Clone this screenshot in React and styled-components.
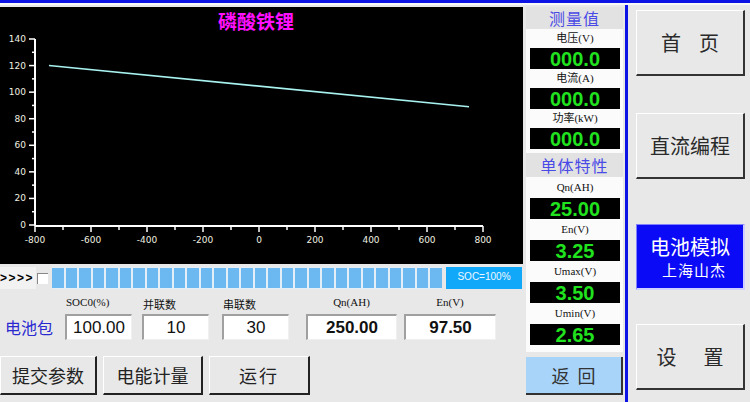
import React from 'react';
import styled, { createGlobalStyle } from 'styled-components';

const CJK = `"Liberation Serif", "Noto Sans CJK SC", serif`;
const SANS = `"Liberation Sans", "Noto Sans CJK SC", sans-serif`;

const GlobalStyle = createGlobalStyle`
    html, body {
        margin: 0;
        padding: 0;
        background: #e8e8e8;
    }
`

// Styled Components
const Screen = styled.div`
    width: 750px;
    height: 402px;
    background: #e8e8e8;
    display: flex;
    flex-direction: column;
    overflow: hidden;
    font-family: ${CJK};
`
const TopBar = styled.div`
    height: 3px;
    background: #0b14e4;
    border-bottom: 2px solid #f8f8f8;
    flex-shrink: 0;
`
const Body = styled.div`
    flex: 1;
    display: flex;
    padding-top: 2px;
`
const Work = styled.div`
    width: 625px;
    flex-shrink: 0;
    display: flex;
`
const ChartCol = styled.div`
    width: 523px;
    display: flex;
    flex-direction: column;
`
const ChartBox = styled.div`
    height: 257px;
    background: #000;
`
const ProgressRow = styled.div`
    height: 24px;
    margin-top: 2px;
    display: flex;
    align-items: center;
`
const Arrows = styled.div`
    width: 36px;
    font-family: ${SANS};
    font-size: 12px;
    font-weight: bold;
    letter-spacing: 1.5px;
    color: #000;
    background: #f2f2f2;
    height: 22px;
    line-height: 22px;
`
const Check = styled.div`
    width: 10px;
    height: 10px;
    background: #fff;
    border-top: 1px solid #888;
    border-left: 1px solid #888;
    margin: 0 4px 0 1px;
`
const Track = styled.div`
    width: 390px;
    height: 22px;
    display: flex;
    gap: 2px;
    padding: 1px 0;
    box-sizing: border-box;
    background: #e4eef6;
`
const Segment = styled.div`
    flex: 1;
    background: #6cb9f2;
`
const SocBox = styled.div`
    width: 76px;
    height: 22px;
    margin-left: 4px;
    background: #12a8fa;
    color: #f0f8ff;
    font-family: ${SANS};
    font-size: 10px;
    text-align: center;
    line-height: 20px;
`
const FormRow = styled.div`
    display: flex;
    align-items: flex-end;
    margin-top: 5px;
    height: 45px;
`
const PackLabel = styled.div`
    width: 60px;
    padding-left: 5px;
    box-sizing: border-box;
    color: #2a2ad0;
    font-size: 16px;
    height: 26px;
    line-height: 26px;
    font-family: "Noto Sans CJK SC", sans-serif;
`
const Field = styled.div`
    display: flex;
    flex-direction: column;
    width: ${p => p.$w}px;
    margin-left: ${p => p.$ml}px;
`
const FieldLabel = styled.div`
    font-size: 11px;
    color: #111;
    height: 18px;
    text-align: ${p => p.$align};
    padding-left: ${p => (p.$align === 'left' ? 1 : 0)}px;
    font-family: ${CJK};
`
const Input = styled.div`
    height: 26px;
    box-sizing: border-box;
    background: #fff;
    border-top: 2px solid #a0a0a0;
    border-left: 2px solid #a0a0a0;
    border-bottom: 1px solid #f0f0f0;
    border-right: 1px solid #f0f0f0;
    font-family: ${SANS};
    font-size: 17px;
    font-weight: ${p => (p.$bold ? 'bold' : 'normal')};
    color: #111;
    text-align: center;
    line-height: 23px;
`
const ButtonRow = styled.div`
    display: flex;
    gap: 6px;
    margin-top: 16px;
`
const Btn = styled.div`
    width: ${p => p.$w}px;
    height: 39px;
    box-sizing: border-box;
    background: #e8e8e8;
    border-top: 1px solid #fff;
    border-left: 1px solid #fff;
    border-right: 2px solid #222;
    border-bottom: 2px solid #222;
    font-family: "Noto Sans CJK SC", sans-serif;
    font-size: 18px;
    color: #222;
    display: flex;
    align-items: center;
    justify-content: center;
    letter-spacing: ${p => p.$ls || 0}px;
`
const MeasureCol = styled.div`
    width: 97px;
    margin-left: 3px;
    display: flex;
    flex-direction: column;
`
const Panel = styled.div`
    background: #fbfbfb;
    height: 345px;
    display: flex;
    flex-direction: column;
    padding: 0 3px 0 4px;
`
const Header = styled.div`
    margin: ${p => p.$mt}px -3px 0 -4px;
    height: ${p => p.$h}px;
    background: #e2e2e2;
    color: #4a4ae6;
    font-family: "Noto Sans CJK SC", sans-serif;
    font-size: 16px;
    text-align: center;
    line-height: ${p => p.$h}px;
    letter-spacing: 1px;
`
const Label = styled.div`
    height: ${p => p.$h}px;
    font-size: 11px;
    color: #111;
    text-align: center;
    line-height: ${p => p.$h}px;
`
const Display = styled.div`
    height: 21px;
    background: #000;
    color: #21e21e;
    font-family: ${SANS};
    font-weight: bold;
    font-size: 20px;
    text-align: center;
    line-height: 22px;
`
const BackBtn = styled.div`
    margin-top: 5px;
    height: 38px;
    background: #a8d4fa;
    border-right: 2px solid #333;
    border-bottom: 2px solid #333;
    box-sizing: border-box;
    color: #333;
    font-family: "Noto Sans CJK SC", sans-serif;
    font-size: 18px;
    letter-spacing: 8px;
    display: flex;
    align-items: center;
    justify-content: center;
    padding-left: 8px;
`
const Divider = styled.div`
    width: 3px;
    flex-shrink: 0;
    background: #0b14e4;
    margin-top: -2px;
`
const Nav = styled.div`
    flex: 1;
    min-width: 0;
    display: flex;
    flex-direction: column;
    padding: 3px 5px 0 8px;
`
const NavBtn = styled.div`
    height: 66px;
    margin-top: ${p => p.$mt}px;
    box-sizing: border-box;
    background: ${p => (p.$active ? '#0a0af6' : '#e8e8e8')};
    border-top: 1px solid ${p => (p.$active ? '#8080ff' : '#fff')};
    border-left: 1px solid ${p => (p.$active ? '#8080ff' : '#fff')};
    border-right: 2px solid ${p => (p.$active ? '#d0d0ff' : '#333')};
    border-bottom: 2px solid ${p => (p.$active ? '#d0d0ff' : '#333')};
    color: ${p => (p.$active ? '#fff' : '#2a2a2a')};
    font-family: "Noto Sans CJK SC", sans-serif;
    font-size: 20px;
    display: flex;
    flex-direction: column;
    align-items: center;
    justify-content: center;
    white-space: nowrap;
    line-height: 1;
`
const NavText = styled.span`
    letter-spacing: ${p => p.$ls || 0}px;
    margin-right: -${p => p.$ls || 0}px;
`
const SubText = styled.div`
    font-size: 15px;
    letter-spacing: 1px;
    padding-left: 8px;
    margin-top: 5px;
`

const X0 = 35
const XPX = 448 / 1600
const Y0 = 218
const YPX = 186 / 140
const xp = v => X0 + (v + 800) * XPX
const yp = v => Y0 - v * YPX

const Chart = () => {
    const xMajor = [-800, -600, -400, -200, 0, 200, 400, 600, 800]
    const xMinor = [-700, -500, -300, -100, 100, 300, 500, 700]
    const yMajor = [0, 20, 40, 60, 80, 100, 120, 140]
    const yMinor = [10, 30, 50, 70, 90, 110, 130]
    return (
        <svg width="523" height="257" viewBox="0 0 523 257">
            <text x="256" y="22" fill="#ff10ff" fontSize="19" fontWeight="bold"
                fontFamily='"Noto Sans CJK SC", sans-serif' textAnchor="middle">磷酸铁锂</text>
            <line x1={X0} y1={yp(140)} x2={X0} y2={Y0 + 1} stroke="#fff" strokeWidth="2" />
            <line x1={X0} y1={Y0 + 1} x2={xp(800)} y2={Y0 + 1} stroke="#fff" strokeWidth="2" />
            {yMajor.map(v => (
                <g key={v}>
                    <line x1={X0 - 6} y1={yp(v)} x2={X0} y2={yp(v)} stroke="#fff" strokeWidth="1.5" />
                    <text x={X0 - 9} y={yp(v) + 3} fill="#f0f0e0" fontSize="9"
                        fontFamily='"DejaVu Sans", sans-serif' textAnchor="end">{v}</text>
                </g>
            ))}
            {yMinor.map(v => (
                <line key={v} x1={X0 - 3} y1={yp(v)} x2={X0} y2={yp(v)} stroke="#fff" strokeWidth="1.5" />
            ))}
            {xMajor.map(v => (
                <g key={v}>
                    <line x1={xp(v)} y1={Y0 + 1} x2={xp(v)} y2={Y0 + 7} stroke="#fff" strokeWidth="1.5" />
                    <text x={xp(v)} y={Y0 + 18} fill="#f0f0e0" fontSize="9"
                        fontFamily='"DejaVu Sans", sans-serif' textAnchor="middle">{v}</text>
                </g>
            ))}
            {xMinor.map(v => (
                <line key={v} x1={xp(v)} y1={Y0 + 1} x2={xp(v)} y2={Y0 + 5} stroke="#fff" strokeWidth="1.5" />
            ))}
            <line x1={xp(-750)} y1={yp(120)} x2={xp(750)} y2={yp(89)} stroke="#a8f2f0" strokeWidth="1.6" />
        </svg>
    )
}

const measures = [
    { label: '电压(V)', value: '000.0' },
    { label: '电流(A)', value: '000.0' },
    { label: '功率(kW)', value: '000.0' },
]
const cells = [
    { label: 'Qn(AH)', value: '25.00' },
    { label: 'En(V)', value: '3.25' },
    { label: 'Umax(V)', value: '3.50' },
    { label: 'Umin(V)', value: '2.65' },
]
const fields = [
    { label: 'SOC0(%)', value: '100.00', w: 67, ml: 5, align: 'left' },
    { label: '并联数', value: '10', w: 67, ml: 10, align: 'left' },
    { label: '串联数', value: '30', w: 67, ml: 13, align: 'left' },
    { label: 'Qn(AH)', value: '250.00', w: 91, ml: 17, align: 'center', bold: true },
    { label: 'En(V)', value: '97.50', w: 92, ml: 7, align: 'center', bold: true },
]

export default function App() {
    return (
        <>
            <GlobalStyle />
            <Screen>
                <TopBar />
                <Body>
                    <Work>
                        <ChartCol>
                            <ChartBox>
                                <Chart />
                            </ChartBox>
                            <ProgressRow>
                                <Arrows>&gt;&gt;&gt;&gt;</Arrows>
                                <Check />
                                <Track>
                                    {Array.from({ length: 29 }).map((_, i) => <Segment key={i} />)}
                                </Track>
                                <SocBox>SOC=100%</SocBox>
                            </ProgressRow>
                            <FormRow>
                                <PackLabel>电池包</PackLabel>
                                {fields.map(f => (
                                    <Field key={f.label} $w={f.w} $ml={f.ml}>
                                        <FieldLabel $align={f.align}>{f.label}</FieldLabel>
                                        <Input $bold={f.bold}>{f.value}</Input>
                                    </Field>
                                ))}
                            </FormRow>
                            <ButtonRow>
                                <Btn $w={97}>提交参数</Btn>
                                <Btn $w={100}>电能计量</Btn>
                                <Btn $w={101} $ls={2}>运行</Btn>
                            </ButtonRow>
                        </ChartCol>
                        <MeasureCol>
                            <Panel>
                                <Header $mt={0} $h={22}>测量值</Header>
                                {measures.map(m => (
                                    <React.Fragment key={m.label}>
                                        <Label $h={19}>{m.label}</Label>
                                        <Display>{m.value}</Display>
                                    </React.Fragment>
                                ))}
                                <Header $mt={4} $h={24}>单体特性</Header>
                                {cells.map(c => (
                                    <React.Fragment key={c.label}>
                                        <Label $h={21}>{c.label}</Label>
                                        <Display>{c.value}</Display>
                                    </React.Fragment>
                                ))}
                            </Panel>
                            <BackBtn>返回</BackBtn>
                        </MeasureCol>
                    </Work>
                    <Divider />
                    <Nav>
                        <NavBtn $mt={0}><NavText $ls={18}>首页</NavText></NavBtn>
                        <NavBtn $mt={37}><NavText>直流编程</NavText></NavBtn>
                        <NavBtn $mt={45} $active>
                            <NavText>电池模拟</NavText>
                            <SubText>上海山杰</SubText>
                        </NavBtn>
                        <NavBtn $mt={34}><NavText $ls={27}>设置</NavText></NavBtn>
                    </Nav>
                </Body>
            </Screen>
        </>
    )
}
